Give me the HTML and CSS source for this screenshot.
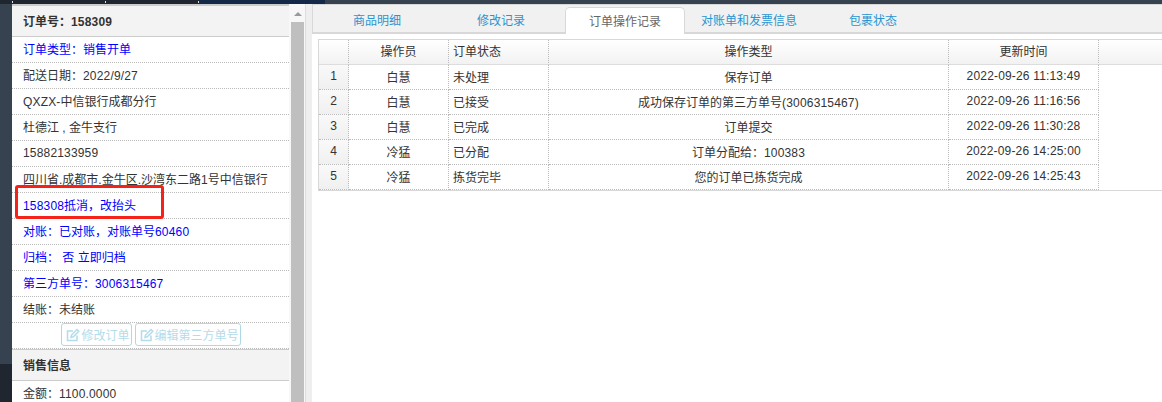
FILE: index.html
```html
<!DOCTYPE html>
<html lang="zh-CN">
<head>
<meta charset="utf-8">
<title>订单操作记录</title>
<link rel="stylesheet" href="styles.css">
</head>
<body>
<div class="page">
  <div class="topbar">
    <span class="seg seg-dark"></span>
    <span class="seg seg-navy"></span>
    <span class="seg seg-slate"></span>
  </div>
  <div class="main">
    <div class="backdrop"><div class="backdrop-low"></div></div>
    <aside class="side">
      <h3 class="side-head head-first"><span>订单号：<span class="d">158309</span></span></h3>
      <div class="row blue"><span>订单类型：销售开单</span></div>
      <div class="row"><span>配送日期：<span class="d">2022/9/27</span></span></div>
      <div class="row"><span><span class="d">QXZX-</span>中信银行成都分行</span></div>
      <div class="row"><span>杜德江 , 金牛支行</span></div>
      <div class="row"><span class="d">15882133959</span></div>
      <div class="row"><span>四川省.成都市.金牛区.沙湾东二路1号中信银行</span></div>
      <div class="row blue"><span><span class="d">158308</span>抵消，改抬头</span></div>
      <div class="row blue"><span>对账：已对账，对账单号<span class="d">60460</span></span></div>
      <div class="row blue"><span>归档：&nbsp;否 立即归档</span></div>
      <div class="row blue"><span>第三方单号：<span class="d">3006315467</span></span></div>
      <div class="row"><span>结账：未结账</span></div>
      <div class="actions">
        <button class="btn" type="button" disabled>
          <svg class="btn-icon" viewBox="0 0 14 14" aria-hidden="true"><path d="M11 7.5V12.5H1.5V3H7"/><path d="M5 9.5L5.5 7 11 1.5 12.8 3.3 7.3 8.8Z"/></svg>修改订单</button>
        <button class="btn" type="button" disabled>
          <svg class="btn-icon" viewBox="0 0 14 14" aria-hidden="true"><path d="M11 7.5V12.5H1.5V3H7"/><path d="M5 9.5L5.5 7 11 1.5 12.8 3.3 7.3 8.8Z"/></svg>编辑第三方单号</button>
      </div>
      <h3 class="side-head"><span>销售信息</span></h3>
      <div class="row"><span>金额：<span class="d">1100.0000</span></span></div>
      <div class="callout"></div>
    </aside>
    <div class="scrollbar">
      <span class="scroll-arrow"></span>
      <span class="scroll-thumb"></span>
    </div>
    <div class="gutter"></div>
    <section class="content">
      <nav class="tabs">
        <a class="tab">商品明细</a>
        <a class="tab">修改记录</a>
        <a class="tab tab-active">订单操作记录</a>
        <a class="tab">对账单和发票信息</a>
        <a class="tab">包裹状态</a>
      </nav>
      <div class="table-wrap">
        <table class="grid">
          <colgroup>
            <col class="c-num"><col class="c-op"><col class="c-state"><col class="c-type"><col class="c-time"><col>
          </colgroup>
          <thead>
            <tr><th></th><th>操作员</th><th class="left">订单状态</th><th>操作类型</th><th>更新时间</th><th class="filler"></th></tr>
          </thead>
          <tbody>
            <tr><td class="num">1</td><td>白慧</td><td class="left">未处理</td><td>保存订单</td><td class="d">2022-09-26 11:13:49</td><td class="filler"></td></tr>
            <tr><td class="num">2</td><td>白慧</td><td class="left">已接受</td><td>成功保存订单的第三方单号<span class="d">(3006315467)</span></td><td class="d">2022-09-26 11:16:56</td><td class="filler"></td></tr>
            <tr><td class="num">3</td><td>白慧</td><td class="left">已完成</td><td>订单提交</td><td class="d">2022-09-26 11:30:28</td><td class="filler"></td></tr>
            <tr><td class="num">4</td><td>冷猛</td><td class="left">已分配</td><td>订单分配给：<span class="d">100383</span></td><td class="d">2022-09-26 14:25:00</td><td class="filler"></td></tr>
            <tr><td class="num">5</td><td>冷猛</td><td class="left">拣货完毕</td><td>您的订单已拣货完成</td><td class="d">2022-09-26 14:25:43</td><td class="filler"></td></tr>
          </tbody>
        </table>
      </div>
    </section>
  </div>
</div>
</body>
</html>
```

FILE: styles.css
```css
* { box-sizing: border-box; }
html, body { margin: 0; padding: 0; height: 100%; overflow: hidden; }
body {
  font-family: "Liberation Sans", "Noto Sans CJK SC", sans-serif;
  font-size: 12px;
  color: #333;
  background: #fff;
}
.page { display: flex; flex-direction: column; width: 1162px; height: 402px; overflow: hidden; }
.d { letter-spacing: 0.17px; }

.topbar { display: flex; flex: 0 0 4px; }
.seg { display: block; height: 100%; }
.seg-dark {
  width: 199px;
  background-color: #20262f;
  background-image: linear-gradient(#ddd, #ddd), linear-gradient(#ddd, #ddd), linear-gradient(#ddd, #ddd);
  background-size: 1px 2px;
  background-position: 12px 1px, 105px 1px, 198px 1px;
  background-repeat: no-repeat;
}
.seg-navy { width: 126px; background: #142848; }
.seg-slate { flex: 1; background: #36424f; }

.main { display: flex; flex: 1; min-height: 0; }

.backdrop { flex: 0 0 12px; display: flex; flex-direction: column; justify-content: flex-end; background: #36424f; }
.backdrop-low { height: 38px; background: #20262f; }

.side {
  position: relative;
  flex: 0 0 277px;
  overflow: hidden;
  background: #fff;
  border-top: 1px solid #ccc;
}
.side-head {
  display: flex;
  align-items: center;
  height: 32px;
  margin: 0;
  padding: 0 11px 2px;
  font-size: 12px;
  font-weight: bold;
  color: #333;
  background: #f3f3f3;
  border-top: 1px solid #ccc;
  border-bottom: 1px solid #ccc;
}
.row {
  display: flex;
  align-items: center;
  height: 26px;
  padding: 0 11px 2px;
  white-space: pre;
  border-bottom: 1px dotted #bbb;
}
.blue { color: #0000ff; }
.actions {
  display: flex;
  justify-content: center;
  align-items: center;
  gap: 3px;
  height: 26px;
  padding-bottom: 2px;
  padding-left: 1px;
  border-bottom: 1px dotted #bbb;
}
.btn {
  display: flex;
  align-items: center;
  height: 23px;
  padding: 0 1px 0 4px;
  font: inherit;
  color: #b3dcea;
  background: #fff;
  border: 1px solid #add8e6;
  border-radius: 3px;
}
.btn-icon { width: 14px; height: 14px; margin-right: 1px; fill: none; stroke: #b3dcea; stroke-width: 1.5; }

.callout {
  position: absolute;
  left: 3px;
  top: 180px;
  width: 149px;
  height: 34px;
  border: 3px solid #f5221a;
  border-radius: 3px;
}

.scrollbar {
  display: flex;
  flex-direction: column;
  align-items: center;
  flex: 0 0 16px;
  padding: 0 1px 0 2px;
  background: #f7f7f7;
}
.scroll-arrow {
  flex: 0 0 auto;
  width: 0;
  height: 0;
  margin: 8px 0 6px;
  border-left: 4px solid transparent;
  border-right: 4px solid transparent;
  border-bottom: 4px solid #999;
}
.scroll-thumb { flex: 1; width: 13px; background: #bfbfbf; }

.gutter { flex: 0 0 7px; background: #eee; border-left: 1px solid #ddd; }

.content { flex: 1; min-width: 0; background: #fff; }
.tabs {
  display: flex;
  align-items: flex-end;
  height: 30px;
  padding-left: 2px;
  background: #f1f1f1;
  border-top: 1px solid #d8d8d8;
  border-left: 1px solid #d8d8d8;
  border-bottom: 2px solid #d8d8d8;
}
.tab {
  display: flex;
  justify-content: center;
  align-items: center;
  flex: 0 0 120px;
  height: 27px;
  margin: 0 2px -2px;
  padding-bottom: 2px;
  color: #2a94d0;
}
.tab-active {
  color: #666;
  background: #fff;
  border: 1px solid #d8d8d8;
  border-bottom: 0;
  border-radius: 5px 5px 0 0;
}

.table-wrap { padding: 5px 0 0 6px; }
.grid {
  width: 100%;
  table-layout: fixed;
  border-collapse: separate;
  border-spacing: 0;
  border-top: 1px solid #d8d8d8;
  border-bottom: 1px solid #d8d8d8;
  border-left: 1px solid #d8d8d8;
}
.c-num { width: 30px; }
.c-op, .c-state { width: 100px; }
.c-type { width: 400px; }
.c-time { width: 150px; }
.grid th, .grid td {
  height: 25px;
  padding: 0 4px 2px;
  font-weight: normal;
  text-align: center;
  border-right: 1px dotted #bbb;
  border-bottom: 1px dotted #bbb;
}
.grid th {
  padding-bottom: 3px;
  background: linear-gradient(#fff, #f2f2f2);
  border-bottom: 1px solid #ddd;
}
.grid .left { text-align: left; }
.grid .num { background: linear-gradient(#f9f9f9, #f0f0f0); }
.grid .filler { border-right: 0; }
.grid td.filler { border-bottom: 0; }
```
